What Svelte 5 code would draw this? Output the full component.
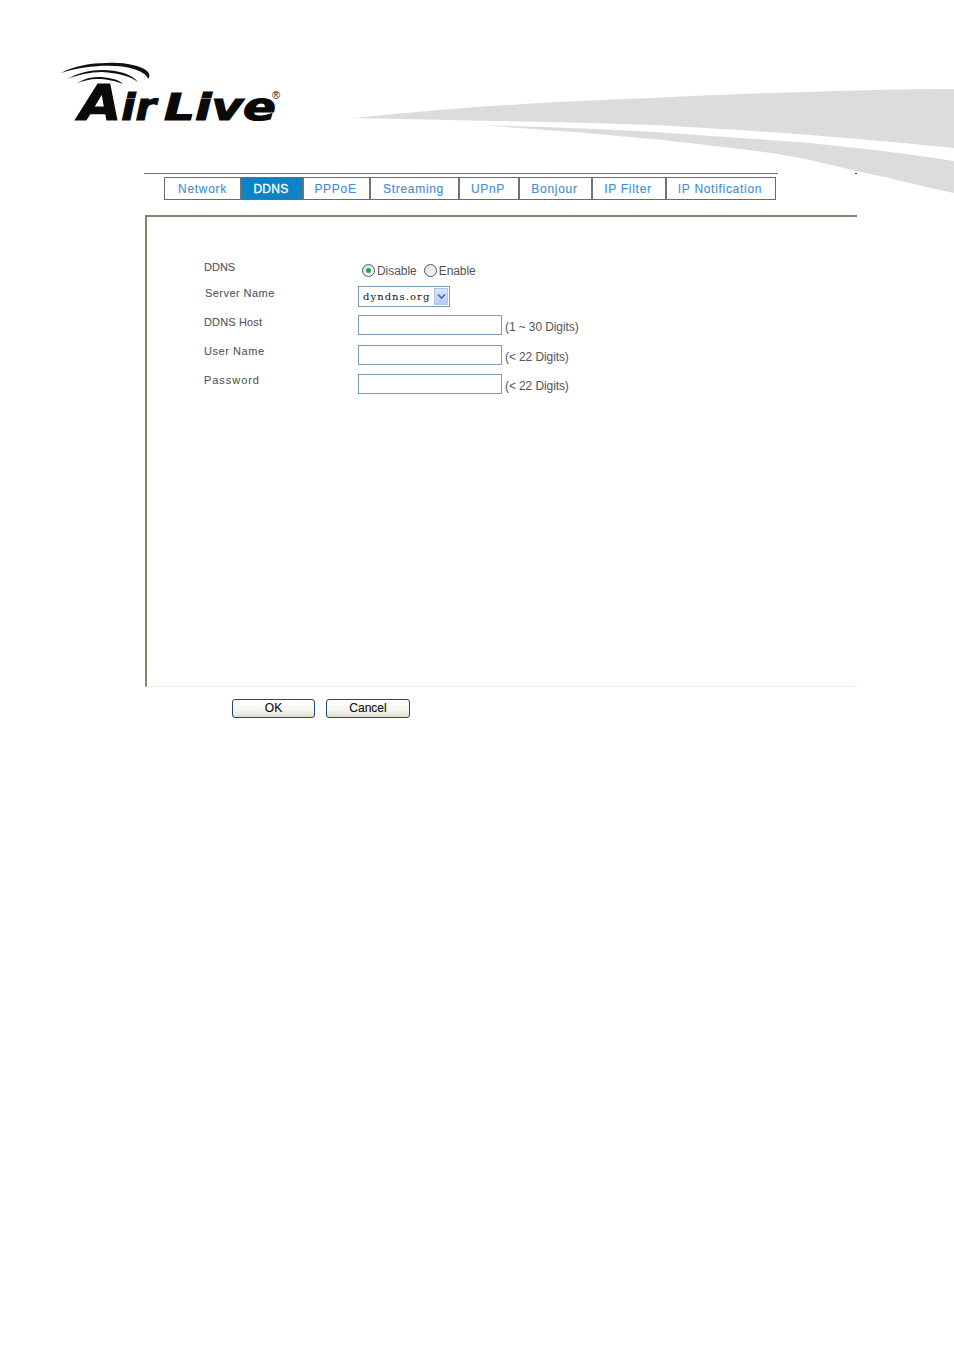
<script>
  const tabs = [
    { label: 'Network' }, { label: 'DDNS', active: true }, { label: 'PPPoE' }, { label: 'Streaming' },
    { label: 'UPnP' }, { label: 'Bonjour' }, { label: 'IP Filter' }, { label: 'IP Notification' }
  ];
  const fields = [
    { label: 'DDNS Host', hint: '(1 ~ 30 Digits)', cls: 'host' },
    { label: 'User Name', hint: '(< 22 Digits)', cls: 'user' },
    { label: 'Password', hint: '(< 22 Digits)', cls: 'pass' }
  ];
</script>

<div class="page">
  <svg class="swoosh" width="954" height="200" viewBox="0 0 954 200" aria-hidden="true">
    <path d="M352 118 C395 114 435 110 477 107 C535 103 595 100 654 98 C705 95 760 93 810 92 C860 90 910 89 954 89 L954 148 C905 143 860 139 810 135 C760 131 705 128 654 125 C600 123 550 122 497 121 C450 120 400 119 352 118Z" fill="#dcdcdc"/>
    <path d="M484 125 C540 127 600 129 654 132 C710 136 760 139 810 143 C860 148 910 154 954 161 L954 193 C930 188 910 183 889 178 C860 172 835 166 810 160 C785 155 760 151 732 148 C705 145 680 142 654 139 C625 137 600 134 575 132 C545 130 515 128 484 125Z" fill="#dcdcdc"/>
    <rect x="855" y="173" width="2" height="1" fill="#444"/>
  </svg>

  <header class="head">
    <svg class="logo" width="240" height="80" viewBox="0 0 240 80" role="img" aria-label="Air Live">
      <path d="M1 15 C14 8 30 5 47 5 C62 4 80 7 87 13 C90 16 90 18 88 21 C87 17 82 13 70 10 C55 6 25 7 1 15Z" fill="#111"/>
      <path d="M7 21 C18 15 30 12 42 12 C58 12 72 16 78 24 C70 18 58 15 42 14 C30 14 18 17 7 21Z" fill="#111"/>
      <path d="M17 25 C24 21 30 19 37 19 C48 19 58 21 63 26 C56 23 46 21 37 21 C30 21 24 23 17 25Z" fill="#111"/>
      <text x="19" y="61.5" class="logotext" textLength="77" lengthAdjust="spacingAndGlyphs"><tspan font-size="50">A</tspan>ir</text>
      <text x="104" y="61.5" class="logotext" textLength="112" lengthAdjust="spacingAndGlyphs">Live</text>
      <text x="212" y="41" class="reg">®</text>
    </svg>
  </header>

  <div class="rule"></div>

  <nav class="tabs">
    {#each tabs as t}
      <a class="tab" class:active={t.active} href="#top">{t.label}</a>
    {/each}
  </nav>

  <section class="panel">
    <div class="row first">
      <span class="label">DDNS</span>
      <div class="radios">
        <span class="radio on"></span><span class="rlabel">Disable</span>
        <span class="radio second"></span><span class="rlabel">Enable</span>
      </div>
    </div>
    <div class="row server">
      <span class="label shift">Server Name</span>
      <div class="select">
        <span class="val">dyndns.org</span>
        <span class="arrow">
          <svg width="9" height="7" viewBox="0 0 9 7"><path d="M1 1.5 L4.5 5 L8 1.5" fill="none" stroke="#4a6a9f" stroke-width="1.6"/></svg>
        </span>
      </div>
    </div>
    {#each fields as f}
      <div class="row field {f.cls}">
        <span class="label">{f.label}</span>
        <div class="input"></div>
        <span class="hint">{f.hint}</span>
      </div>
    {/each}
  </section>

  <div class="actions">
    <button class="btn ok">OK</button>
    <button class="btn cancel">Cancel</button>
  </div>
</div>

<style>
  :global(body) { margin: 0; background: #fff; }
  .page {
    position: relative;
    width: 954px;
    height: 1350px;
    overflow: hidden;
    font-family: "Liberation Sans", Arial, sans-serif;
  }
  .swoosh { position: absolute; left: 0; top: 0; }
  .head { position: relative; height: 173px; }
  .logo { position: absolute; left: 60px; top: 58px; overflow: visible; }
  .logotext {
    font-family: "DejaVu Sans", sans-serif;
    font-weight: 700;
    font-style: italic;
    font-size: 38px;
    fill: #0a0a0a;
    stroke: #0a0a0a;
    stroke-width: 1.2px;
  }
  .reg { font-size: 11px; font-family: "Liberation Sans", sans-serif; fill: #111; }
  .rule {
    position: relative;
    width: 634px;
    height: 1px;
    margin-left: 144px;
    background: #77756c;
  }
  .tabs {
    position: relative;
    display: grid;
    grid-template-columns: 75px 62px 67px 89px 60px 73px 74px 110px;
    width: 612px;
    height: 23px;
    box-sizing: border-box;
    margin: 3px 0 0 164px;
    border: 1px solid #6b6b6b;
  }
  .tab {
    display: flex;
    align-items: center;
    justify-content: center;
    box-sizing: border-box;
    border-left: 2px solid #727272;
    padding-right: 2px;
    font-size: 12px;
    letter-spacing: 0.7px;
    color: #3f8cd8;
    -webkit-text-stroke: 0.12px #3f8cd8;
    text-decoration: none;
    background: #fff;
  }
  .tab:first-child { border-left: 0; padding-right: 0; }
  .tab.active {
    background: #0a84c6;
    color: #fff;
    -webkit-text-stroke: 0.3px #fff;
    letter-spacing: 0.3px;
  }
  .panel {
    box-sizing: border-box;
    width: 712px;
    height: 472px;
    margin: 15px 0 0 145px;
    border-top: 2px solid #85826f;
    border-left: 2px solid #85826f;
    border-bottom: 1px solid #f1efe2;
    padding-left: 57px;
    color: #555;
  }
  .row { display: flex; align-items: flex-start; }
  .label {
    width: 154px;
    flex: none;
    font-size: 11px;
    line-height: 14px;
    color: #555;
    letter-spacing: 0.45px;
    -webkit-text-stroke: 0.1px #555;
  }
  .first .label { letter-spacing: 0px; }
  .host .label { letter-spacing: 0.15px; }
  .user .label { letter-spacing: 0.55px; }
  .pass .label { letter-spacing: 0.95px; }
  .first { margin-top: 43px; height: 26px; }
  .shift { padding-left: 1px; width: 153px; }
  .server { height: 22px; }
  .radios { display: flex; align-items: center; height: 21px; padding-left: 4px; }
  .radio {
    box-sizing: border-box;
    width: 13px;
    height: 13px;
    border: 1px solid #3d5f80;
    border-radius: 50%;
    background: linear-gradient(135deg, #dcdcd6, #fff);
    display: flex;
    align-items: center;
    justify-content: center;
  }
  .radio.on::after {
    content: "";
    width: 5px;
    height: 5px;
    border-radius: 50%;
    background: #2fa34a;
  }
  .radio.second { margin-left: 7px; }
  .rlabel { font-size: 12px; color: #555; margin-left: 2px; letter-spacing: -0.05px; }
  .select {
    box-sizing: border-box;
    width: 92px;
    height: 21px;
    border: 1px solid #7f9db9;
    display: flex;
    align-items: center;
    justify-content: space-between;
    padding: 1px;
  }
  .val {
    font-family: "DejaVu Serif", "Liberation Mono", serif;
    font-size: 10px;
    color: #111;
    padding-left: 3px;
    letter-spacing: 1.05px;
  }
  .arrow {
    width: 14px;
    height: 17px;
    background: linear-gradient(#d8e4fb, #b7ccf5);
    border: 1px solid #b3c6ea;
    box-sizing: border-box;
    display: flex;
    align-items: center;
    justify-content: center;
  }
  .field { height: 20px; }
  .host { margin-top: 7px; }
  .user { margin-top: 10px; }
  .pass { margin-top: 9px; }
  .user .label, .pass .label { margin-top: -1px; }
  .input {
    box-sizing: border-box;
    width: 144px;
    height: 20px;
    background: #fff;
    border: 1px solid #7f9db9;
    flex: none;
  }
  .hint { font-size: 12px; line-height: 14px; color: #555; margin: 5px 0 0 3px; letter-spacing: -0.1px; }
  .actions { display: flex; gap: 11px; margin: 12px 0 0 232px; }
  .btn {
    box-sizing: border-box;
    height: 19px;
    padding: 0 0 2px;
    border: 1px solid #1d4a78;
    border-radius: 3px;
    background: linear-gradient(#fff 0%, #f6f5ee 60%, #dcdcd2 100%);
    font-family: "Liberation Sans", Arial, sans-serif;
    font-size: 12px;
    color: #111;
    -webkit-text-stroke: 0.15px #111;
  }
  .ok { width: 83px; }
  .cancel { width: 84px; }
</style>
